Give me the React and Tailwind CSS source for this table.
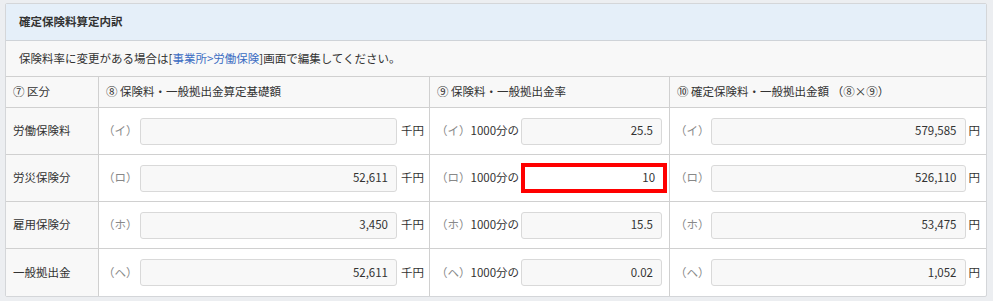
import React from "react";

const rows = [
  { name: "労働保険料", k: "（イ）", base: "", rate: "25.5", amt: "579,585" },
  { name: "労災保険分", k: "（ロ）", base: "52,611", rate: "10", amt: "526,110", hl: true },
  { name: "雇用保険分", k: "（ホ）", base: "3,450", rate: "15.5", amt: "53,475" },
  { name: "一般拠出金", k: "（ヘ）", base: "52,611", rate: "0.02", amt: "1,052" },
];

function Field({ value, className = "" }) {
  return (
    <div
      className={
        "h-[27px] flex items-center justify-end pr-[8px] rounded-[3px] border border-[#d9d9d9] bg-[#f8f8f8] text-[#333] " +
        className
      }
    >
      {value}
    </div>
  );
}

export default function App() {
  return (
    <div
      className="w-[993px] h-[301px] bg-[#eceef1] pt-[3px] pl-[5px] text-[11.5px] text-[#333]"
      style={{ fontFamily: '"Noto Sans CJK JP", "Noto Sans", sans-serif' }}
    >
      <div className="w-[982px] border border-[#d4d6d9] rounded-[2px] bg-white overflow-hidden">
        <div className="h-[37px] bg-[#e5eff9] border-b border-[#cfd3d8] flex items-center pl-[13px] font-bold text-[#333]">
          確定保険料算定内訳
        </div>
        <div className="h-[36px] bg-[#f8f8f8] border-b border-[#d0d0d0] flex items-center pl-[13px]">
          保険料率に変更がある場合は[<span className="text-[#3b6cc2]">事業所&gt;労働保険</span>]画面で編集してください。
        </div>
        <div className="grid grid-cols-[93px_331px_240px_316px]">
          <div className="h-[31px] bg-[#f8f8f8] border-r border-b border-[#d0d0d0] flex items-center pl-[7px]">⑦ 区分</div>
          <div className="h-[31px] bg-[#f8f8f8] border-r border-b border-[#d0d0d0] flex items-center pl-[7px]">⑧ 保険料・一般拠出金算定基礎額</div>
          <div className="h-[31px] bg-[#f8f8f8] border-r border-b border-[#d0d0d0] flex items-center pl-[7px]">⑨ 保険料・一般拠出金率</div>
          <div className="h-[31px] bg-[#f8f8f8] border-b border-[#d0d0d0] flex items-center pl-[7px]">⑩ 確定保険料・一般拠出金額 （⑧×⑨）</div>
          {rows.map((r, i) => {
            const last = i === rows.length - 1;
            const bb = last ? "" : " border-b";
            return (
              <React.Fragment key={i}>
                <div className={"h-[47px] bg-[#f8f8f8] border-r border-[#d0d0d0] flex items-center pl-[7px]" + bb}>
                  {r.name}
                </div>
                <div className={"h-[47px] border-r border-[#d0d0d0] flex items-center pl-[4px] pr-[5px]" + bb}>
                  <span className="text-[#888] w-[36px] shrink-0">{r.k}</span>
                  <Field value={r.base} className="flex-1 ml-[1px]" />
                  <span className="ml-[4px]">千円</span>
                </div>
                <div className={"h-[47px] border-r border-[#d0d0d0] flex items-center pl-[6px] pr-[7px]" + bb}>
                  <span className="text-[#888] shrink-0">{r.k}</span>
                  <span className="shrink-0">1000分の</span>
                  {r.hl ? (
                    <div className="ml-[2px] shrink-0 w-[146px] h-[30px] border-[4px] border-[#ff0000] bg-white flex items-center justify-end pr-[8px]">
                      {r.rate}
                    </div>
                  ) : (
                    <Field value={r.rate} className="ml-[2px] flex-1" />
                  )}
                </div>
                <div className={"h-[47px] border-[#d0d0d0] flex items-center pl-[5px] pr-[6px]" + bb}>
                  <span className="text-[#888] w-[36px] shrink-0">{r.k}</span>
                  <Field value={r.amt} className="flex-1" />
                  <span className="ml-[3px]">円</span>
                </div>
              </React.Fragment>
            );
          })}
        </div>
      </div>
    </div>
  );
}
